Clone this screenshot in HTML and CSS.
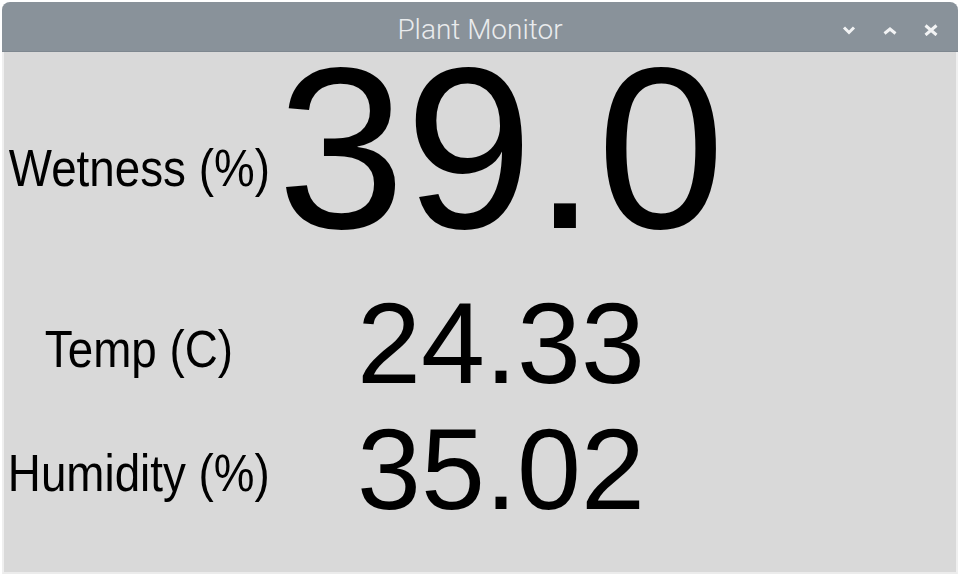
FILE: index.html
```html
<!DOCTYPE html>
<html>
<head>
<meta charset="utf-8">
<title>Plant Monitor</title>
<link rel="stylesheet" href="styles.css">
</head>
<body>
<div class="window">
  <div class="titlebar">
    <div class="spacer"></div>
    <div class="title">Plant Monitor</div>
    <div class="controls">
      <svg class="btn" width="16" height="16" viewBox="0 0 16 16"><path d="M3 7.5 L8 12.5 L13 7.5" fill="none" stroke="#f2f3f4" stroke-width="3" stroke-linejoin="miter"/></svg>
      <svg class="btn" width="16" height="16" viewBox="0 0 16 16"><path d="M2.5 13.5 L8 9 L13.5 13.5" fill="none" stroke="#f2f3f4" stroke-width="3" stroke-linejoin="miter"/></svg>
      <svg class="btn" width="16" height="16" viewBox="0 0 16 16"><path d="M2.5 5.5 L13.5 15 M13.5 5.5 L2.5 15" fill="none" stroke="#f2f3f4" stroke-width="3"/></svg>
    </div>
  </div>
  <div class="content">
    <div class="grid">
      <div class="label r1"><span class="lbl">Wetness (%)</span></div>
      <div class="value big">39.0</div>
      <div class="label r2"><span class="lbl">Temp (C)</span></div>
      <div class="value">24.33</div>
      <div class="label r3"><span class="lbl">Humidity (%)</span></div>
      <div class="value">35.02</div>
    </div>
  </div>
</div>
</body>
</html>
```
FILE: styles.css
```css
html, body {
  margin: 0;
  padding: 0;
  background: #ffffff;
}
body {
  width: 967px;
  height: 584px;
  overflow: hidden;
  font-family: "Liberation Sans", Arial, sans-serif;
}
.window {
  margin: 2px 0 0 2px;
  width: 956px;
}
.titlebar {
  height: 50px;
  background: #89929a;
  border-radius: 8px 8px 0 0;
  display: grid;
  grid-template-columns: 1fr auto 1fr;
  align-items: center;
  box-shadow: inset 0 -1px 0 #7e878f;
}
.title {
  font-family: Roboto, "Liberation Sans", sans-serif;
  font-weight: 300;
  font-size: 28px;
  line-height: 34px;
  padding-top: 6px;
  color: #e9ebed;
  white-space: nowrap;
}
.controls {
  justify-self: end;
  display: flex;
  align-items: center;
  gap: 25px;
  padding-right: 19px;
  padding-top: 1px;
}
.btn {
  display: block;
}
.content {
  height: 520px;
  background: #d9d9d9;
  border-left: 2px solid #efefef;
  border-right: 2px solid #efefef;
  border-bottom: 2px solid #ececec;
  width: 952px;
}
.grid {
  display: grid;
  grid-template-columns: 270px 454px;
  grid-template-rows: 231px 126px 120px;
  align-items: start;
}
.label {
  display: flex;
  justify-content: center;
  font-size: 52px;
  line-height: 60px;
  white-space: nowrap;
  color: #000;
}
.lbl {
  display: inline-block;
  transform: scaleX(0.88);
  transform-origin: center;
}
.label.r1 { margin-top: 85.5px; }
.label.r2 { margin-top: 36px; }
.label.r3 { margin-top: 34px; }
.value {
  display: flex;
  justify-content: center;
  font-size: 115px;
  line-height: 120px;
  white-space: nowrap;
  color: #000;
}
.value.big {
  font-size: 230px;
  line-height: 194px;
}
```
